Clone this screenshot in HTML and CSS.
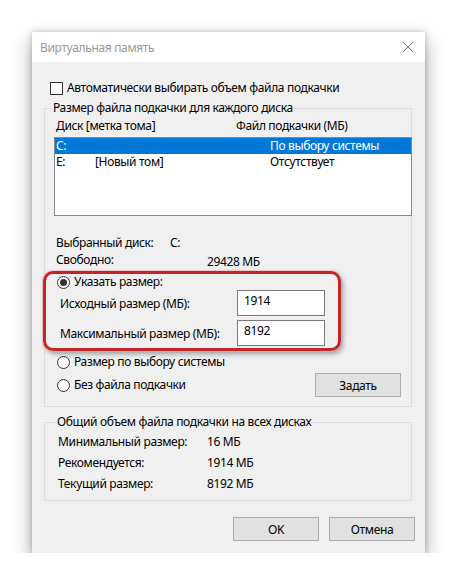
FILE: index.html
```html
<!DOCTYPE html>
<html lang="ru">
<head>
  <meta charset="UTF-8">
  <title>Виртуальная память</title>
  <link rel="stylesheet" href="styles.css">
</head>
<body>
  <div class="dialog">
    <div class="titlebar">
      <span class="title">Виртуальная память</span>
      <svg class="close" width="12" height="12" viewBox="0 0 12 12">
        <path d="M1 1 L11 11 M11 1 L1 11" stroke="#777" stroke-width="1" fill="none"/>
      </svg>
    </div>

    <div class="content">
      <label class="auto">
        <span class="checkbox"></span>
        <span>Автоматически выбирать объем файла подкачки</span>
      </label>

      <fieldset class="group perdisk">
        <legend>Размер файла подкачки для каждого диска</legend>
        <div class="cols">
          <span>Диск [метка тома]</span>
          <span class="col-file">Файл подкачки (МБ)</span>
        </div>
        <div class="listbox">
          <div class="row selected">
            <span class="drive">C:</span>
            <span class="label"></span>
            <span class="file">По выбору системы</span>
          </div>
          <div class="row">
            <span class="drive">E:</span>
            <span class="label">[Новый том]</span>
            <span class="file">Отсутствует</span>
          </div>
        </div>

        <div class="info">
          <span>Выбранный диск:</span><span class="disk">C:</span>
        </div>
        <div class="info">
          <span>Свободно:</span><span class="free">29428 МБ</span>
        </div>

        <div class="radio-row">
          <span class="radio checked"></span>
          <span>Указать размер:</span>
        </div>
        <div class="sizes">
          <span>Исходный размер (МБ):</span>
          <div class="edit">1914</div>
          <span>Максимальный размер (МБ):</span>
          <div class="edit">8192</div>
        </div>
        <div class="radio-row">
          <span class="radio"></span>
          <span>Размер по выбору системы</span>
        </div>
        <div class="radio-row last">
          <span class="radio"></span>
          <span>Без файла подкачки</span>
          <button class="btn set">Задать</button>
        </div>

        <div class="highlight"></div>
      </fieldset>

      <fieldset class="group total">
        <legend>Общий объем файла подкачки на всех дисках</legend>
        <div class="stat"><span>Минимальный размер:</span><span>16 МБ</span></div>
        <div class="stat"><span>Рекомендуется:</span><span>1914 МБ</span></div>
        <div class="stat"><span>Текущий размер:</span><span>8192 МБ</span></div>
      </fieldset>

      <div class="actions">
        <button class="btn">OK</button>
        <button class="btn">Отмена</button>
      </div>
    </div>
  </div>
</body>
</html>
```

FILE: styles.css
```css
body {
  margin: 0;
  background: #fff;
  font-family: "Noto Sans", "Open Sans", sans-serif;
  font-size: 12px;
  letter-spacing: -0.35px;
  color: #000;
}
.dialog {
  width: 393px;
  height: 521px;
  margin: 32px 0 0 32px;
  background: #f0f0f0;
  box-shadow: 0 8px 18px rgba(0, 0, 0, 0.35), 0 0 6px rgba(0, 0, 0, 0.2);
  display: flex;
  flex-direction: column;
}
.titlebar {
  height: 30px;
  background: #fff;
  display: flex;
  align-items: center;
  justify-content: space-between;
  padding: 0 10px 0 8px;
}
.title {
  color: #999;
  font-size: 12px;
}
.close { margin-right: 1px; }
.content {
  padding: 18px 13px 0 12px;
  display: flex;
  flex-direction: column;
}
.auto {
  display: flex;
  align-items: center;
  gap: 4px;
  height: 16px;
  margin-left: 6px;
  line-height: 16px;
}
.checkbox {
  width: 11px;
  height: 11px;
  border: 1px solid #333;
  background: #fff;
}
.group {
  margin: 4px 0 0;
  border: 1px solid #dcdcdc;
  padding: 0 0 0 9px;
  min-width: 0;
}
.group legend {
  padding: 0 1px;
  margin-left: -2px;
  line-height: 16px;
}
.perdisk {
  position: relative;
  padding-bottom: 9px;
}
.cols {
  display: grid;
  grid-template-columns: 180px 1fr;
  height: 16px;
  line-height: 16px;
  margin-top: 2px;
  padding-left: 2px;
}
.listbox {
  margin: 3px -1px 0 0;
  height: 77px;
  background: #fff;
  border: 1px solid #828790;
}
.row {
  display: grid;
  grid-template-columns: 39px 175px 1fr;
  height: 16px;
  line-height: 16px;
  padding-left: 1px;
}
.row.selected {
  background: #0078d7;
  color: #fff;
}
.info {
  display: grid;
  grid-template-columns: 114px 1fr;
  height: 17px;
  line-height: 17px;
  padding-left: 2px;
}
.perdisk .listbox + .info { margin-top: 18px; }
.info .free {
  padding-left: 37px;
  margin-top: 2px;
}
.radio-row {
  display: flex;
  align-items: center;
  gap: 4px;
  height: 16px;
  line-height: 16px;
  margin-top: 6px;
  padding-left: 3px;
}
.radio {
  width: 11px;
  height: 11px;
  border: 1px solid #333;
  border-radius: 50%;
  background: #fff;
  display: flex;
  align-items: center;
  justify-content: center;
}
.radio.checked::after {
  content: "";
  width: 7px;
  height: 7px;
  border-radius: 50%;
  background: #333;
}
.sizes {
  display: grid;
  grid-template-columns: 177px 88px;
  grid-auto-rows: 26px;
  row-gap: 4px;
  align-items: center;
  padding-left: 6px;
}
.edit {
  height: 24px;
  background: #fff;
  border: 1px solid #7a7a7a;
  padding: 0 6px;
  line-height: 19px;
}
.sizes + .radio-row { margin-top: 8px; }
.radio-row.last {
  height: 24px;
  margin-top: 3px;
}
.btn {
  font-family: inherit;
  font-size: 12px;
  letter-spacing: inherit;
  color: #000;
  width: 86px;
  height: 24px;
  padding: 0;
  background: #e1e1e1;
  border: 1px solid #adadad;
}
.btn.set { margin: 0 10px 0 auto; }
/* красная рамка-выделение вокруг ручной настройки размера */
.highlight {
  position: absolute;
  left: -2px;
  top: 155px;
  width: 292px;
  height: 74px;
  border: 3px solid #c4252b;
  border-radius: 10px;
  box-shadow: 0 0 0 1px rgba(240, 170, 170, 0.6), 2px 3px 5px rgba(0, 0, 0, 0.35);
}
.total {
  margin-top: 7px;
  padding: 1px 0 6px 13px;
}
.stat {
  display: grid;
  grid-template-columns: 149px 1fr;
  height: 21px;
  line-height: 21px;
}
.actions {
  display: flex;
  justify-content: flex-end;
  gap: 10px;
  margin: 16px -3px 0 0;
}
```
